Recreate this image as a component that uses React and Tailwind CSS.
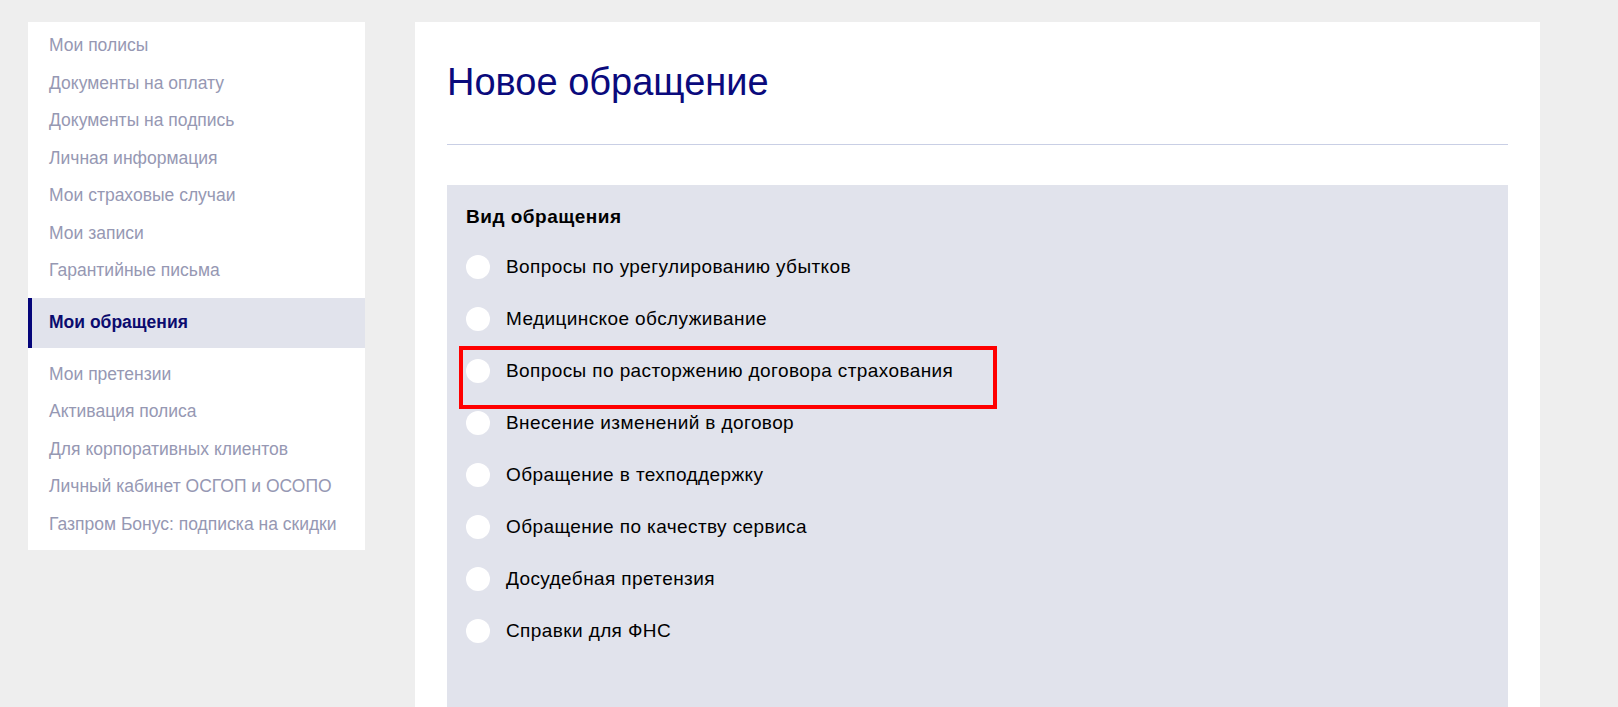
import { useState } from 'react'

const menu = [
  'Мои полисы',
  'Документы на оплату',
  'Документы на подпись',
  'Личная информация',
  'Мои страховые случаи',
  'Мои записи',
  'Гарантийные письма',
]

const menuAfter = [
  'Мои претензии',
  'Активация полиса',
  'Для корпоративных клиентов',
  'Личный кабинет ОСГОП и ОСОПО',
  'Газпром Бонус: подписка на скидки',
]

const options = [
  'Вопросы по урегулированию убытков',
  'Медицинское обслуживание',
  'Вопросы по расторжению договора страхования',
  'Внесение изменений в договор',
  'Обращение в техподдержку',
  'Обращение по качеству сервиса',
  'Досудебная претензия',
  'Справки для ФНС',
]

function MenuItem({ label }) {
  return (
    <a href="#" className="block pl-[21px] leading-[37.5px] text-[17.5px] text-[#9698b3] hover:text-[#0b0b78]">
      {label}
    </a>
  )
}

export default function App() {
  const [selected, setSelected] = useState(null)

  return (
    <div className="h-[707px] overflow-hidden bg-[#eeeeee] font-['Liberation_Sans',Arial,sans-serif]">
      <div className="flex items-start gap-[50px] pt-[22px] pl-[28px]">
        {/* Sidebar */}
        <nav className="w-[337px] shrink-0 bg-white pt-[5px] pb-[7px]">
          {menu.map((m) => (
            <MenuItem key={m} label={m} />
          ))}
          <div className="my-[8px] flex h-[50px] items-center border-l-4 border-[#05057a] bg-[#e1e3ec] pl-[17px] text-[17.5px] font-bold text-[#0b0b6e]">
            Мои обращения
          </div>
          {menuAfter.map((m) => (
            <MenuItem key={m} label={m} />
          ))}
        </nav>

        {/* Main card */}
        <main className="w-[1125px] shrink-0 bg-white px-[32px] pt-[36px]">
          <h1 className="text-[38px] leading-[48px] font-normal text-[#0a0a7c]">Новое обращение</h1>
          <div className="mt-[38px] h-px bg-[#c9cfe5]" />

          <section className="mt-[40px] min-h-[560px] bg-[#e1e3ec] px-[19px] pt-[20px]">
            <h2 className="text-[19px] leading-6 tracking-[0.5px] font-bold text-black">Вид обращения</h2>
            <div className="mt-[12px]">
              {options.map((o, i) => (
                <label key={o} className="relative flex h-[52px] cursor-pointer items-center gap-4">
                  <input
                    type="radio"
                    name="kind"
                    className="sr-only"
                    checked={selected === i}
                    onChange={() => setSelected(i)}
                  />
                  <span className="flex h-6 w-6 shrink-0 items-center justify-center rounded-full bg-white">
                    {selected === i && <span className="h-2.5 w-2.5 rounded-full bg-[#0a0a7c]" />}
                  </span>
                  <span className="text-[19px] tracking-[0.4px] text-black">{o}</span>
                  {i === 2 && (
                    <span className="pointer-events-none absolute left-[-7px] top-[1px] h-[63px] w-[538px] border-4 border-[#ff0000]" />
                  )}
                </label>
              ))}
            </div>
          </section>
        </main>
      </div>
    </div>
  )
}
